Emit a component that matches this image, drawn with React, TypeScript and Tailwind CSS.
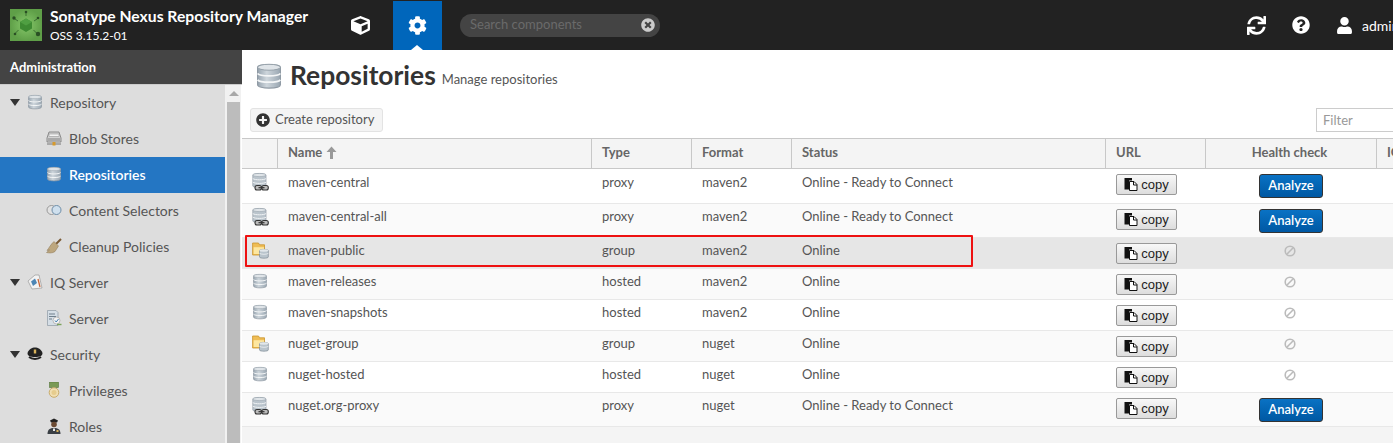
import { ReactNode } from 'react';
import { FaCog, FaCube, FaPlusCircle, FaQuestionCircle, FaSync, FaTimesCircle, FaUser } from 'react-icons/fa';

type RepoKind = 'proxy' | 'group' | 'hosted';

interface Repo {
  name: string;
  kind: RepoKind;
  format: string;
  status: string;
  height: string;
  bg: string;
  textPad: string;
  analyze?: boolean;
}

const repos: Repo[] = [
  { name: 'maven-central', kind: 'proxy', format: 'maven2', status: 'Online - Ready to Connect', height: 'h-[35px]', bg: 'bg-white', textPad: 'pt-[4px]', analyze: true },
  { name: 'maven-central-all', kind: 'proxy', format: 'maven2', status: 'Online - Ready to Connect', height: 'h-[34px]', bg: 'bg-[#fafafa]', textPad: 'pt-[3px]', analyze: true },
  { name: 'maven-public', kind: 'group', format: 'maven2', status: 'Online', height: 'h-[31px]', bg: 'bg-[#e6e6e6]', textPad: 'pt-[3px]' },
  { name: 'maven-releases', kind: 'hosted', format: 'maven2', status: 'Online', height: 'h-[31px]', bg: 'bg-[#fafafa]', textPad: 'pt-[3px]' },
  { name: 'maven-snapshots', kind: 'hosted', format: 'maven2', status: 'Online', height: 'h-[31px]', bg: 'bg-white', textPad: 'pt-[3px]' },
  { name: 'nuget-group', kind: 'group', format: 'nuget', status: 'Online', height: 'h-[31px]', bg: 'bg-[#fafafa]', textPad: 'pt-[3px]' },
  { name: 'nuget-hosted', kind: 'hosted', format: 'nuget', status: 'Online', height: 'h-[31px]', bg: 'bg-white', textPad: 'pt-[3px]' },
  { name: 'nuget.org-proxy', kind: 'proxy', format: 'nuget', status: 'Online - Ready to Connect', height: 'h-[34px]', bg: 'bg-[#fafafa]', textPad: 'pt-[3px]', analyze: true },
];

const Db = ({ size = 16 }: { size?: number }) => (
  <svg width={size} height={size} viewBox="0 0 16 16" className="shrink-0">
    <defs>
      <linearGradient id="dbfill" x1="0" x2="1" y1="0" y2="0">
        <stop offset="0" stopColor="#98a5b0" />
        <stop offset="0.4" stopColor="#ced6dc" />
        <stop offset="1" stopColor="#9aa7b2" />
      </linearGradient>
    </defs>
    <path d="M1.5 3C1.5 1 14.5 1 14.5 3V13C14.500 15.500 1.500 15.500 1.500 13Z" fill="url(#dbfill)" stroke="#8f9aa4" strokeWidth="0.7" />
    <ellipse cx="8" cy="3" rx="6.500" ry="1.700" fill="#dfe4e8" stroke="#8f9aa4" strokeWidth="0.5" />
    <path d="M1.500 6.600C3 8.400 13 8.400 14.500 6.600M1.500 10.200C3 12 13 12 14.500 10.200" fill="none" stroke="#f4f6f7" strokeWidth="1" />
  </svg>
);

const ProxyIcon = () => (
  <svg width="17" height="20" viewBox="0 0 17 20" className="-mt-[1px]">
    <path d="M.8 3C.8 1 14 1 14 3V14C14 16 .8 16 .8 14Z" fill="#bac4cc" stroke="#8f9aa4" strokeWidth="0.7" />
    <ellipse cx="7.400" cy="3" rx="6.600" ry="1.600" fill="#dfe4e8" stroke="#8f9aa4" strokeWidth="0.5" />
    <path d="M.8 6.600C3 8.200 12 8.200 14 6.600M.8 10.200C3 11.800 12 11.800 14 10.200" fill="none" stroke="#f0f3f5" strokeWidth="1" />
    <rect x="3" y="13.500" width="6.500" height="4.500" rx="2" fill="#bbb" stroke="#333" strokeWidth="1.100" />
    <rect x="9.800" y="13.500" width="6.500" height="4.500" rx="2" fill="#bbb" stroke="#333" strokeWidth="1.100" />
    <path d="M6.500 15.700H12.500" stroke="#333" strokeWidth="1.200" />
  </svg>
);

const GroupIcon = () => (
  <svg width="17" height="17" viewBox="0 0 17 17">
    <path d="M.6 1H6.500L7.500 2.800H12.500V13H.6Z" fill="#efbd55" stroke="#c9942c" strokeWidth="0.8" />
    <path d="M1.600 5.200H12V12H1.600Z" fill="#fde7a0" />
    <path d="M7.500 8.500C7.500 7 16.300 7 16.300 8.500V15C16.300 16.600 7.500 16.600 7.500 15Z" fill="#b9c4cc" stroke="#7f8c97" strokeWidth="0.7" />
    <ellipse cx="11.900" cy="8.500" rx="4.400" ry="1.200" fill="#e2e7ea" />
    <path d="M7.500 11.400C10 12.600 14 12.600 16.300 11.400" fill="none" stroke="#eef1f3" strokeWidth="0.8" />
  </svg>
);

const BlobIcon = () => (
  <svg width="16" height="16" viewBox="0 0 16 16">
    <path d="M3 2H13L15 8V12H1V8Z" fill="#d2d2d2" stroke="#777" strokeWidth="0.8" />
    <rect x="3" y="4" width="10" height="2.500" fill="#f2f2f2" stroke="#888" strokeWidth="0.5" />
    <rect x="1.500" y="8" width="13" height="3" fill="#a9a9a9" />
    <path d="M1 14H15" stroke="#777" />
    <rect x="6.500" y="12" width="3" height="3.500" fill="#d69a2d" />
  </svg>
);

const SelectorIcon = () => (
  <svg width="16" height="16" viewBox="0 0 16 16">
    <circle cx="5.500" cy="8" r="4.500" fill="#e2e2e2" stroke="#999" />
    <circle cx="10.500" cy="8" r="4.500" fill="#cfe0ee" stroke="#6f8ea8" />
  </svg>
);

const BroomIcon = () => (
  <svg width="16" height="16" viewBox="0 0 16 16">
    <path d="M10 6L15 1" stroke="#7a5a35" strokeWidth="2" />
    <path d="M8 3.500L12.500 8L9 13.500C6 15.500 3 15 .5 14.500L3.500 12L1 12.500C3 10 5 6 8 3.500Z" fill="#bda77f" stroke="#8a7550" strokeWidth="0.5" />
  </svg>
);

const IqIcon = () => (
  <svg width="16" height="16" viewBox="0 0 16 16">
    <path d="M1 7L8 1H12L15 14L5 15Z" fill="#f3f3f3" stroke="#999" strokeWidth="0.7" />
    <path d="M4 7.500L8 4.500L10 9L6 12Z" fill="#4d86b5" />
    <path d="M11 5L13 13" stroke="#c9673a" strokeWidth="1.300" />
  </svg>
);

const ServerIcon = () => (
  <svg width="16" height="16" viewBox="0 0 16 16">
    <path d="M1.500 .5H10L12 2.500V15.500H1.500Z" fill="#d5dee6" stroke="#8d9aa5" strokeWidth="0.7" />
    <path d="M3 4H9M3 6.500H10M3 9H6" stroke="#6f7f8c" />
    <circle cx="10.500" cy="10.500" r="3.500" fill="#f2f2f2" stroke="#999" strokeWidth="0.6" />
    <path d="M9 10.500L10.200 12L12.500 9" fill="none" stroke="#3f7fb5" />
    <path d="M11 14.500H15.500" stroke="#7ba35a" strokeWidth="1.400" />
  </svg>
);

const CapIcon = () => (
  <svg width="16" height="16" viewBox="0 0 16 16">
    <path d="M.5 7C2 3 5 1.500 8 1.500S14 3 15.500 7C15.500 10 13 11 8 11S.5 10 .5 7Z" fill="#222" />
    <path d="M2 11C5 13.500 11 13.500 14 11" fill="none" stroke="#222" strokeWidth="2" />
    <rect x="6.800" y="3.500" width="2.400" height="4" fill="#d8b25a" />
  </svg>
);

const MedalIcon = () => (
  <svg width="16" height="16" viewBox="0 0 16 16">
    <rect x="3.500" y="0" width="9" height="5.500" fill="#7a9a55" stroke="#56733a" strokeWidth="0.6" />
    <circle cx="8" cy="10.500" r="4.800" fill="#f1dfb2" stroke="#c9ac6a" />
    <circle cx="8" cy="10.500" r="2.500" fill="#e6cc8d" />
  </svg>
);

const OfficerIcon = () => (
  <svg width="16" height="16" viewBox="0 0 16 16">
    <path d="M4 2.500L8 .5L12 2.500L11 4.500H5Z" fill="#222" />
    <circle cx="8" cy="6.500" r="2.800" fill="#6b4a33" />
    <path d="M1.500 16C1.500 11.500 4 10 8 10S14.500 11.500 14.500 16Z" fill="#3a3f44" />
    <path d="M7 10.500H9V13H7Z" fill="#e8e8e8" />
    <rect x="10.500" y="12" width="2" height="2" fill="#d8b25a" />
  </svg>
);

const CopyGlyph = () => (
  <svg width="14" height="13" viewBox="0 0 14 13">
    <path d="M.5 0H8V2.500H5V11.500H.5Z" fill="#111" />
    <path d="M5.500 3.500H10L13 6.500V12.500H5.500Z" fill="#fff" stroke="#111" strokeWidth="1" />
    <path d="M9.500 3.500V7H13" fill="none" stroke="#111" strokeWidth="1" />
  </svg>
);

const BanGlyph = () => (
  <svg width="12" height="12" viewBox="0 0 12 12" className="mt-[2px]">
    <circle cx="6" cy="6" r="4.800" fill="none" stroke="#bbb" strokeWidth="1.600" />
    <path d="M2.800 9.200L9.200 2.800" stroke="#bbb" strokeWidth="1.600" />
  </svg>
);

const SortArrow = () => (
  <svg width="11" height="13" viewBox="0 0 11 13" className="ml-[4px]">
    <path d="M5.500 .5L10.500 6H7V13H4V6H.5Z" fill="#999" />
  </svg>
);

const Logo = () => (
  <svg width="32" height="32" viewBox="0 0 32 32" className="shrink-0">
    <defs>
      <radialGradient id="logobg">
        <stop offset="0" stopColor="#86c86a" />
        <stop offset="1" stopColor="#5f9f48" />
      </radialGradient>
    </defs>
    <rect width="32" height="32" fill="url(#logobg)" />
    <path d="M16 9.500L22 13V19.500L16 23L10 19.500V13Z" fill="#3d8a32" />
    <path d="M16 9.500L22 13L16 16.500L10 13Z" fill="#4f9f42" />
    <g stroke="#3a6e30" strokeWidth="1">
      <path d="M16 7V4M8 12L5 10M24 12L27 10M8.500 21L5.500 24M23.500 21L26.500 24" />
    </g>
    <g fill="#2a4f24">
      <circle cx="16" cy="3" r="1.300" />
      <circle cx="4" cy="9" r="1.700" />
      <circle cx="28" cy="9" r="1.300" />
      <circle cx="5" cy="25" r="1.300" />
      <circle cx="28" cy="25" r="2.200" />
    </g>
  </svg>
);

const NavItem = ({ icon, label, top, active }: { icon: ReactNode; label: string; top?: boolean; active?: boolean }) => (
  <div className={`flex h-9 shrink-0 items-center pb-[2px] text-[14px] ${top ? 'pl-[10px]' : 'pl-[46px]'} ${active ? 'bg-[#2476c3] font-semibold text-white' : 'text-[#555]'}`}>
    {top && <span className="mr-[7px] h-0 w-0 border-x-[5px] border-t-[7px] border-x-transparent border-t-[#333]" />}
    <span className="flex w-[16px] items-center justify-center">{icon}</span>
    <span className="ml-[7px]">{label}</span>
  </div>
);

const Th = ({ w, children, center }: { w: string; children?: ReactNode; center?: boolean }) => (
  <div className={`flex h-full shrink-0 items-center border-r border-[#c8c8c8] pb-[2px] font-bold text-[#666] ${w} ${center ? 'justify-center pr-[12px] pl-[9px]' : 'px-[10px]'}`}>
    {children}
  </div>
);

const Td = ({ w, pad, children }: { w: string; pad: string; children?: ReactNode }) => (
  <div className={`flex shrink-0 px-[10px] ${pad} ${w}`}>{children}</div>
);

export default function App() {
  return (
    <div className="relative flex h-[443px] w-[1393px] flex-col overflow-hidden bg-white font-['Lato','Liberation_Sans',sans-serif] text-[13px] text-[#555]">
      <header className="flex h-[50px] shrink-0 items-center bg-[#222] text-white">
        <div className="ml-[10px]"><Logo /></div>
        <div className="ml-2 w-[293px] shrink-0">
          <div className="text-[15.7px] leading-[18px] font-bold whitespace-nowrap">Sonatype Nexus Repository Manager</div>
          <div className="mt-[3px] text-[12px] leading-[16px]">OSS 3.15.2-01</div>
        </div>
        <div className="flex w-[35px] justify-center"><FaCube size={19} /></div>
        <div className="relative ml-[15px] mt-[1px] flex h-[49px] w-[49px] items-center justify-center bg-[#0066bb]">
          <FaCog size={19} />
          <span className="absolute bottom-0 left-[18px] h-0 w-0 border-x-[6px] border-b-[5px] border-x-transparent border-b-white" />
        </div>
        <div className="ml-[18px] flex h-[23px] w-[200px] items-center justify-between rounded-full bg-[#444] pr-[5px] pl-[10px] text-[13px] text-[#6a6a6a]">
          Search components
          <FaTimesCircle size={14} className="text-[#ccc]" />
        </div>
        <div className="ml-auto flex items-center whitespace-nowrap">
          <FaSync size={19} />
          <FaQuestionCircle size={18} className="ml-[26px]" />
          <FaUser size={17} className="ml-[26px]" />
          <span className="ml-[9px] w-[31px] overflow-hidden text-[14px]">admin</span>
        </div>
      </header>

      <div className="flex min-h-0 flex-1">
        <aside className="flex w-[242px] shrink-0 flex-col bg-white">
          <div className="flex h-[35px] shrink-0 items-center border-b border-[#ccc] bg-[#444] pt-[1px] pl-[10px] text-[13px] font-bold text-white">Administration</div>
          <div className="flex min-h-0 flex-1">
            <nav className="flex w-[225px] flex-col overflow-hidden bg-[#ddd]">
              <NavItem top icon={<Db />} label="Repository" />
              <NavItem icon={<BlobIcon />} label="Blob Stores" />
              <NavItem active icon={<Db />} label="Repositories" />
              <NavItem icon={<SelectorIcon />} label="Content Selectors" />
              <NavItem icon={<BroomIcon />} label="Cleanup Policies" />
              <NavItem top icon={<IqIcon />} label="IQ Server" />
              <NavItem icon={<ServerIcon />} label="Server" />
              <NavItem top icon={<CapIcon />} label="Security" />
              <NavItem icon={<MedalIcon />} label="Privileges" />
              <NavItem icon={<OfficerIcon />} label="Roles" />
            </nav>
            <div className="flex w-[16px] flex-col bg-[#f1f1f1] pl-[2px]">
              <div className="flex h-[17px] items-center justify-center">
                <span className="h-0 w-0 border-x-[5px] border-b-[5px] border-x-transparent border-b-[#a8a8a8]" />
              </div>
              <div className="mr-[1px] flex-1 bg-[#bcbcbc]" />
            </div>
          </div>
        </aside>

        <main className="flex min-w-0 flex-1 flex-col bg-[#f4f4f4]">
          <div className="h-[88px] shrink-0 bg-white">
            <div className="flex h-[52px] items-center pl-[13px]">
              <Db size={28} />
              <span className="ml-[7px] text-[26.400px] font-bold text-[#333]">Repositories</span>
              <span className="ml-[6px] mt-[8px] text-[13px]">Manage repositories</span>
            </div>
            <div className="mt-[6px] flex items-center justify-between pl-2">
              <button className="flex h-[24px] w-[133px] items-center rounded-[3px] border border-[#e3e3e3] bg-[#f4f4f4] pl-[5px] text-[13px] text-[#555]">
                <FaPlusCircle size={14} className="text-[#333]" />
                <span className="ml-[5px]">Create repository</span>
              </button>
              <div className="mr-[-3px] flex h-[24px] w-[80px] items-center border border-[#ccc] pt-[1px] pl-[6px] text-[13px] text-[#999]">Filter</div>
            </div>
          </div>

          <div className="flex h-[31px] w-[1151px] shrink-0 items-center overflow-hidden border-y border-[#c8c8c8] bg-[#f4f4f4]">
            <Th w="w-[36px]" />
            <Th w="w-[314px]">Name <SortArrow /></Th>
            <Th w="w-[100px]">Type</Th>
            <Th w="w-[100px]">Format</Th>
            <Th w="w-[314px]">Status</Th>
            <Th w="w-[100px]">URL</Th>
            <Th w="w-[171px]" center>Health check</Th>
            <Th w="w-[60px]">IQ</Th>
          </div>

          {repos.map((r) => (
            <div key={r.name} className={`flex w-[1151px] shrink-0 border-b border-[#e8e8e8] ${r.height} ${r.bg}`}>
              <div className="flex w-[36px] shrink-0 justify-center pt-[4px]">
                {r.kind === 'proxy' && <ProxyIcon />}
                {r.kind === 'group' && <GroupIcon />}
                {r.kind === 'hosted' && <Db />}
              </div>
              <Td w="w-[314px]" pad={r.textPad}>{r.name}</Td>
              <Td w="w-[100px]" pad={r.textPad}>{r.kind}</Td>
              <Td w="w-[100px]" pad={r.textPad}>{r.format}</Td>
              <Td w="w-[314px]" pad={r.textPad}>{r.status}</Td>
              <Td w="w-[100px]" pad="pt-[5px]">
                <button className="flex h-[21px] w-[61px] items-center justify-center gap-[3px] rounded-[2px] border border-[#999] bg-gradient-to-b from-[#f8f8f8] to-[#ddd] font-['Liberation_Sans',sans-serif] text-[13px] text-[#222]">
                  <CopyGlyph /> copy
                </button>
              </Td>
              <div className="flex w-[171px] shrink-0 justify-center pt-[5px] pr-[12px] pl-[9px]">
                {r.analyze ? (
                  <button className="ml-[2px] h-[24px] w-[64px] rounded-[3px] border border-[#333] bg-gradient-to-b from-[#0a72c4] to-[#0058a3] text-[13px] font-semibold text-white">Analyze</button>
                ) : (
                  <BanGlyph />
                )}
              </div>
            </div>
          ))}
        </main>
      </div>

      {/* annotation drawn on top of the screenshot */}
      <div className="absolute top-[235px] left-[245px] h-[32px] w-[728px] rounded-[1px] border-2 border-[#ee1111]" />
    </div>
  );
}
